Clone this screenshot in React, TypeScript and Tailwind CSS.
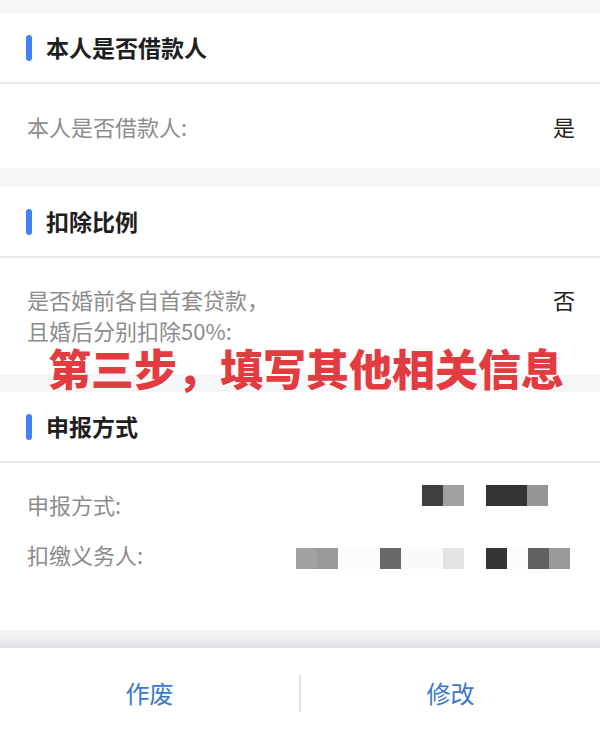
import React from "react";

const font = { fontFamily: '"Noto Sans CJK SC", "Noto Sans", sans-serif' };

function Header({ title }: { title: string }) {
  return (
    <div className="flex h-[71px] items-center border-b-2 border-[#ebebeb] pl-[26px]">
      <span className="h-[26px] w-[6px] rounded-full bg-[#3f84f1]" />
      <span className="ml-[14px] text-[23px] font-bold text-[#1e1e1e]">{title}</span>
    </div>
  );
}

type Block = { w: string; c: string };

function Mosaic({ blocks }: { blocks: Block[] }) {
  return (
    <div className="flex">
      {blocks.map((b, i) => (
        <div key={i} className={`h-[21px] ${b.w} ${b.c}`} />
      ))}
    </div>
  );
}

const row1: Block[] = [
  { w: "w-[21px]", c: "bg-[#404040]" },
  { w: "w-[21px]", c: "bg-[#a0a0a0]" },
  { w: "w-[22px]", c: "bg-white" },
  { w: "w-[41px]", c: "bg-[#333333]" },
  { w: "w-[21px]", c: "bg-[#959595]" },
];

const row2: Block[] = [
  { w: "w-[21px]", c: "bg-[#a2a2a2]" },
  { w: "w-[21px]", c: "bg-[#999999]" },
  { w: "w-[42px]", c: "bg-[#fbfbfb]" },
  { w: "w-[21px]", c: "bg-[#686868]" },
  { w: "w-[42px]", c: "bg-[#fafafa]" },
  { w: "w-[21px]", c: "bg-[#e3e3e3]" },
  { w: "w-[22px]", c: "bg-white" },
  { w: "w-[21px]", c: "bg-[#353535]" },
  { w: "w-[21px]", c: "bg-[#fbfbfb]" },
  { w: "w-[21px]", c: "bg-[#616161]" },
  { w: "w-[21px]", c: "bg-[#9a9a9a]" },
];

export default function App() {
  return (
    <div style={font} className="relative h-[744px] w-[600px] overflow-hidden bg-[#f5f6f8] pt-[13px]">
      <section className="bg-white">
        <Header title="本人是否借款人" />
        <div className="flex justify-between py-[27px] pl-[27px] pr-[25px] text-[22px] leading-[30px]">
          <span className="text-[#8c8c8c]">本人是否借款人:</span>
          <span className="text-[#222]">是</span>
        </div>
      </section>

      <section className="mt-[19px] bg-white">
        <Header title="扣除比例" />
        <div className="flex justify-between pb-[28px] pl-[27px] pr-[25px] pt-[26px] text-[22px] leading-[31px]">
          <span className="text-[#8c8c8c]">
            是否婚前各自首套贷款，
            <br />
            且婚后分别扣除50%:
          </span>
          <span className="text-[#222]">否</span>
        </div>
      </section>

      <section className="mt-[18px] bg-white">
        <Header title="申报方式" />
        <div className="flex flex-col gap-[20px] pb-[61px] pl-[27px] pt-[26px] text-[22px] leading-[30px]">
          <div className="flex items-start justify-between pr-[52px]">
            <span className="text-[#8c8c8c]">申报方式:</span>
            <div className="-mt-[4px]">
              <Mosaic blocks={row1} />
            </div>
          </div>
          <div className="flex items-start justify-between pr-[30px]">
            <span className="text-[#8c8c8c]">扣缴义务人:</span>
            <div className="mt-[9px]">
              <Mosaic blocks={row2} />
            </div>
          </div>
        </div>
      </section>

      <div className="h-[18px] bg-gradient-to-b from-[#f4f5f7] via-[#eff0f2] to-[#dedfe2]" />

      <footer className="flex h-[96px] items-center bg-white pb-[6px]">
        <button className="flex-1 text-[24px] text-[#3a78c9]">作废</button>
        <span className="h-[37px] w-[2px] bg-[#e2e2e2]" />
        <button className="flex-1 text-[24px] text-[#3a78c9]">修改</button>
      </footer>

      <div className="absolute left-[48px] top-[346px] text-[43px] font-black leading-none text-[#e23b40] [text-shadow:0_0_2px_#fff,0_0_3px_#fff,0_0_4px_#fff]">
        第三步，填写其他相关信息
      </div>
    </div>
  );
}
